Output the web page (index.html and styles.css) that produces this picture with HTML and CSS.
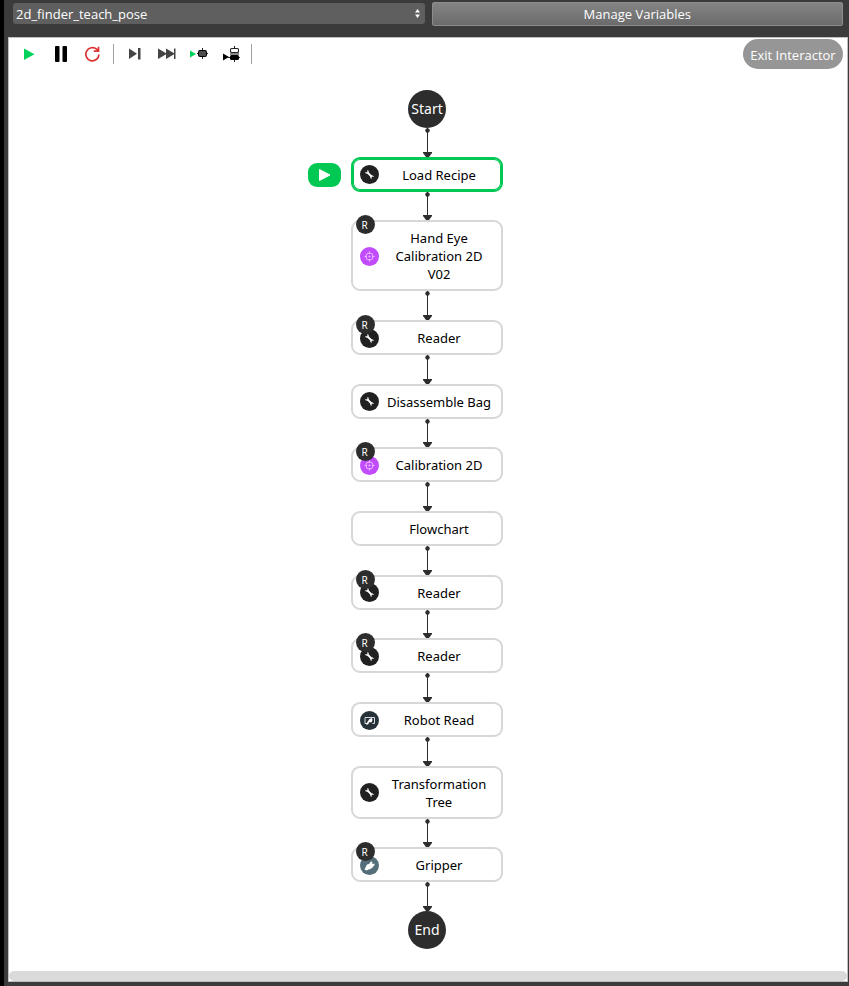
FILE: index.html
```html
<!DOCTYPE html>
<html lang="en">
<head>
<meta charset="utf-8">
<title>Interactor</title>
<link rel="stylesheet" href="styles.css">
</head>
<body>
<svg class="defs" aria-hidden="true">
  <symbol id="wrench" viewBox="0 0 19 19">
    <path d="M7.500 7.500L11.500 11.500" stroke="#fff" stroke-width="1.800" fill="none"/>
    <path d="M5.600 7.200A1.300 1.300 0 1 0 7.400 5.600M13.400 11.800A1.300 1.300 0 1 0 11.600 13.400" stroke="#fff" stroke-width="1.200" fill="none"/>
  </symbol>
  <symbol id="target" viewBox="0 0 19 19">
    <g stroke="#eab8ff" fill="none"><circle cx="9.500" cy="9.500" r="3.600"/><path d="M9.500 4.500v2.500M9.500 12v2.500M4.500 9.500h2.500M12 9.500h2.500"/></g>
    <circle cx="9.500" cy="9.500" r="1" fill="#eab8ff"/>
  </symbol>
  <symbol id="robot" viewBox="0 0 19 19">
    <path d="M7 12.500H5v-6h9.500v6h-2" stroke="#d4dade" fill="none"/>
    <path d="M6 13.500l2-3.500 1.500-2 2.500-1 .5 2-1 2.500-2-.5-1.500 2.500z" fill="#fff"/>
  </symbol>
  <symbol id="gripper" viewBox="0 0 19 19">
    <path d="M4.500 13.500l2.500-5 2-.5 2-2.500 1.500.5-.5 1.500 1 .5 1.500-.5v1.500l-2 2.500-2 1.500-2 .5-2 1z" fill="#fff"/>
  </symbol>
  <symbol id="link-start" viewBox="0 0 9 5"><path d="M4.500 0v5" stroke="#2d2d2d"/><circle cx="4.500" cy="2.500" r="2.200" fill="#2d2d2d"/></symbol>
  <symbol id="link-end" viewBox="0 0 9 5"><path d="M0 0h9v1L6 5H3L0 1z" fill="#2d2d2d"/></symbol>
</svg>

<header class="topbar">
  <div class="picker">
    <select class="picker-select" aria-label="Program">
      <option>2d_finder_teach_pose</option>
    </select>
    <svg class="picker-arrows" width="5" height="9" viewBox="0 0 5 9" aria-hidden="true"><path d="M0 3.500L2.500 0 5 3.500zM0 5.500h5L2.500 9z" fill="#fff"/></svg>
  </div>
  <button class="manage" type="button">Manage Variables</button>
</header>

<main class="panel">
  <div class="toolbar">
    <button class="tool" type="button" aria-label="Run"><svg width="20" height="20" viewBox="0 0 20 20"><path d="M5 4.500v11.500l10.500-5.700z" fill="#00d25b"/></svg></button>
    <button class="tool" type="button" aria-label="Pause"><svg width="20" height="20" viewBox="0 0 20 20"><rect x="4" y="2" width="4.500" height="16" rx="1"/><rect x="11.500" y="2" width="4.500" height="16" rx="1"/></svg></button>
    <button class="tool" type="button" aria-label="Restart"><svg width="20" height="20" viewBox="0 0 20 20" fill="none" stroke="#dc3232" stroke-width="1.700"><path d="M16 10.500a6.600 6.600 0 1 1-2.300-5.300L15.500 7"/><path d="M15.500 2.800v4.400h-4.700"/></svg></button>
    <span class="divider"></span>
    <button class="tool" type="button" aria-label="Step"><svg width="20" height="20" viewBox="0 0 20 20" fill="#444"><path d="M4 4.500v10.500l8-5.200z"/><rect x="13" y="4" width="2.500" height="11.500"/></svg></button>
    <button class="tool" type="button" aria-label="Fast forward"><svg width="20" height="20" viewBox="0 0 20 20" fill="#444"><path d="M1 4.500v10.500l9-5.200zM9 4.500v10.500l9-5.200z"/><rect x="17" y="4.500" width="1.500" height="10.500"/></svg></button>
    <button class="tool" type="button" aria-label="Run from block"><svg width="20" height="20" viewBox="0 0 20 20"><path d="M1 6.500v7l6-3.500z" fill="#00d25b"/><path d="M13.500 4v11M8 9.500h11" stroke="#222"/><rect x="9" y="6" width="9" height="7" rx="2"/><rect x="10" y="7" width="7" height="5" rx="1" fill="#4c4c4c"/></svg></button>
    <button class="tool" type="button" aria-label="Step into block"><svg width="20" height="20" viewBox="0 0 20 20"><path d="M2 9.500v7l6-3.500z"/><path d="M13.500 2v16M7 13.500h12" stroke="#222"/><rect x="9" y="4" width="9" height="5" rx="1.500" fill="#222"/><rect x="10" y="5" width="7" height="3" rx="1" fill="#fff"/><rect x="9" y="9" width="9" height="2" fill="#888"/><rect x="9" y="11" width="9" height="5" rx="1.500"/></svg></button>
    <span class="divider"></span>
    <button class="exit" type="button">Exit Interactor</button>
  </div>

  <section class="flow" aria-label="Program flow">
    <div class="terminal">Start</div>
    <div class="link"><svg class="cap"><use href="#link-start"/></svg><svg class="cap"><use href="#link-end"/></svg></div>
    <div class="node active">
      <button class="run-here" type="button" aria-label="Run from here"><svg width="14" height="14" viewBox="0 0 14 14"><path d="M1.500 1.500v11L12 7z" fill="#fff" stroke="#fff" stroke-linejoin="round"/></svg></button>
      <svg class="icon dark"><use href="#wrench"/></svg><span class="label">Load Recipe</span>
    </div>
    <div class="link"><svg class="cap"><use href="#link-start"/></svg><svg class="cap"><use href="#link-end"/></svg></div>
    <div class="node"><svg class="icon purple"><use href="#target"/></svg><span class="label">Hand Eye Calibration 2D V02</span><span class="badge">R</span></div>
    <div class="link"><svg class="cap"><use href="#link-start"/></svg><svg class="cap"><use href="#link-end"/></svg></div>
    <div class="node"><svg class="icon dark"><use href="#wrench"/></svg><span class="label">Reader</span><span class="badge">R</span></div>
    <div class="link"><svg class="cap"><use href="#link-start"/></svg><svg class="cap"><use href="#link-end"/></svg></div>
    <div class="node"><svg class="icon dark"><use href="#wrench"/></svg><span class="label">Disassemble Bag</span></div>
    <div class="link"><svg class="cap"><use href="#link-start"/></svg><svg class="cap"><use href="#link-end"/></svg></div>
    <div class="node"><svg class="icon purple"><use href="#target"/></svg><span class="label">Calibration 2D</span><span class="badge">R</span></div>
    <div class="link"><svg class="cap"><use href="#link-start"/></svg><svg class="cap"><use href="#link-end"/></svg></div>
    <div class="node"><span class="label">Flowchart</span></div>
    <div class="link"><svg class="cap"><use href="#link-start"/></svg><svg class="cap"><use href="#link-end"/></svg></div>
    <div class="node"><svg class="icon dark"><use href="#wrench"/></svg><span class="label">Reader</span><span class="badge">R</span></div>
    <div class="link"><svg class="cap"><use href="#link-start"/></svg><svg class="cap"><use href="#link-end"/></svg></div>
    <div class="node"><svg class="icon dark"><use href="#wrench"/></svg><span class="label">Reader</span><span class="badge">R</span></div>
    <div class="link"><svg class="cap"><use href="#link-start"/></svg><svg class="cap"><use href="#link-end"/></svg></div>
    <div class="node"><svg class="icon navy"><use href="#robot"/></svg><span class="label">Robot Read</span></div>
    <div class="link"><svg class="cap"><use href="#link-start"/></svg><svg class="cap"><use href="#link-end"/></svg></div>
    <div class="node"><svg class="icon dark"><use href="#wrench"/></svg><span class="label">Transformation Tree</span></div>
    <div class="link"><svg class="cap"><use href="#link-start"/></svg><svg class="cap"><use href="#link-end"/></svg></div>
    <div class="node"><svg class="icon slate"><use href="#gripper"/></svg><span class="label">Gripper</span><span class="badge">R</span></div>
    <div class="link"><svg class="cap"><use href="#link-start"/></svg><svg class="cap"><use href="#link-end"/></svg></div>
    <div class="terminal">End</div>
  </section>
  <div class="scrollbar"></div>
</main>
</body>
</html>
```

FILE: styles.css
```css
* {
  box-sizing: border-box;
}

body {
  margin: 0;
  min-height: 100vh;
  display: flex;
  flex-direction: column;
  background: #3b3b3b;
  border-left: 4px solid #000;
  font: 13px/18px "Noto Sans", sans-serif;
}

button,
select {
  font: inherit;
  border: 0;
  padding: 0;
}

.defs {
  position: absolute;
  width: 0;
  height: 0;
}

.topbar {
  display: grid;
  grid-template-columns: 1fr 1fr;
  gap: 7px;
  padding: 2px 6px 11px 9px;
}

.picker {
  position: relative;
  display: flex;
  padding: 1px 0 2px;
}

.picker-select {
  appearance: none;
  width: 100%;
  height: 21px;
  padding: 1px 16px 0 3px;
  border-radius: 3px;
  background: #5f5f5f;
  color: #fff;
  font-family: "Open Sans", sans-serif;
}

.picker-arrows {
  position: absolute;
  right: 5px;
  top: 7px;
}

.manage {
  height: 24px;
  border: 1px solid #8c8c8c;
  border-radius: 2px;
  background: linear-gradient(#848484, #6b6b6b);
  color: #fff;
  font-family: "Open Sans", sans-serif;
}

.panel {
  flex: 1;
  display: flex;
  flex-direction: column;
  margin: 0 1px 4px 4px;
  border: 1px solid #bebebe;
  background: #fff;
}

.toolbar {
  display: flex;
  align-items: center;
  height: 32px;
  padding: 0 4px;
}

.tool {
  display: flex;
  align-items: center;
  justify-content: center;
  width: 32px;
  height: 32px;
  background: none;
}

.divider {
  width: 1px;
  height: 20px;
  margin: 0 5px 0 4px;
  background: #a0a0a0;
}

.exit {
  width: 100px;
  height: 30px;
  margin-left: auto;
  padding-top: 2px;
  border-radius: 15px;
  background: #969696;
  color: #fff;
  font-family: "Open Sans", sans-serif;
}

.flow {
  flex: 1;
  display: flex;
  flex-direction: column;
  align-items: center;
  padding: 20px 2px 22px 0;
}

.terminal {
  flex: none;
  width: 38px;
  height: 38px;
  border-radius: 50%;
  background: #2d2d2d;
  color: #fff;
  font-size: 14px;
  line-height: 38px;
  text-align: center;
}

.link {
  flex: 1 0 20px;
  display: flex;
  flex-direction: column;
  justify-content: space-between;
  align-items: center;
  width: 9px;
  background: linear-gradient(#2d2d2d, #2d2d2d) center / 1px 100% no-repeat;
}

.cap {
  width: 9px;
  height: 5px;
}

.node {
  position: relative;
  flex: none;
  display: grid;
  grid-template-columns: 19px 1fr;
  column-gap: 6px;
  align-items: center;
  width: 152px;
  padding: 7px 8px 6px 7px;
  border: 2px solid #d7d7d7;
  border-radius: 9px;
  background: #fff;
}

.node.active {
  border-color: #00c853;
  box-shadow: inset 0 0 0 1px #00c853;
}

.label {
  grid-column: 2;
  text-align: center;
  color: #000;
}

.icon {
  width: 19px;
  height: 19px;
  margin: -1px 0;
  border-radius: 50%;
}

.dark {
  background: #212121;
}

.purple {
  background: #c04cfd;
}

.navy {
  background: #263238;
}

.slate {
  background: #546e7a;
}

.badge {
  position: absolute;
  top: -7px;
  left: 3px;
  width: 19px;
  height: 19px;
  border-radius: 50%;
  background: #2d2d2d;
  color: #fff;
  font-size: 10px;
  line-height: 20px;
  padding-right: 2px;
  text-align: center;
}

.run-here {
  position: absolute;
  top: 4px;
  left: -45px;
  display: flex;
  align-items: center;
  justify-content: center;
  width: 33px;
  height: 24px;
  border-radius: 9px;
  background: #00c853;
}

.scrollbar {
  height: 10px;
  border-radius: 5px;
  background: #dadada;
}
```
